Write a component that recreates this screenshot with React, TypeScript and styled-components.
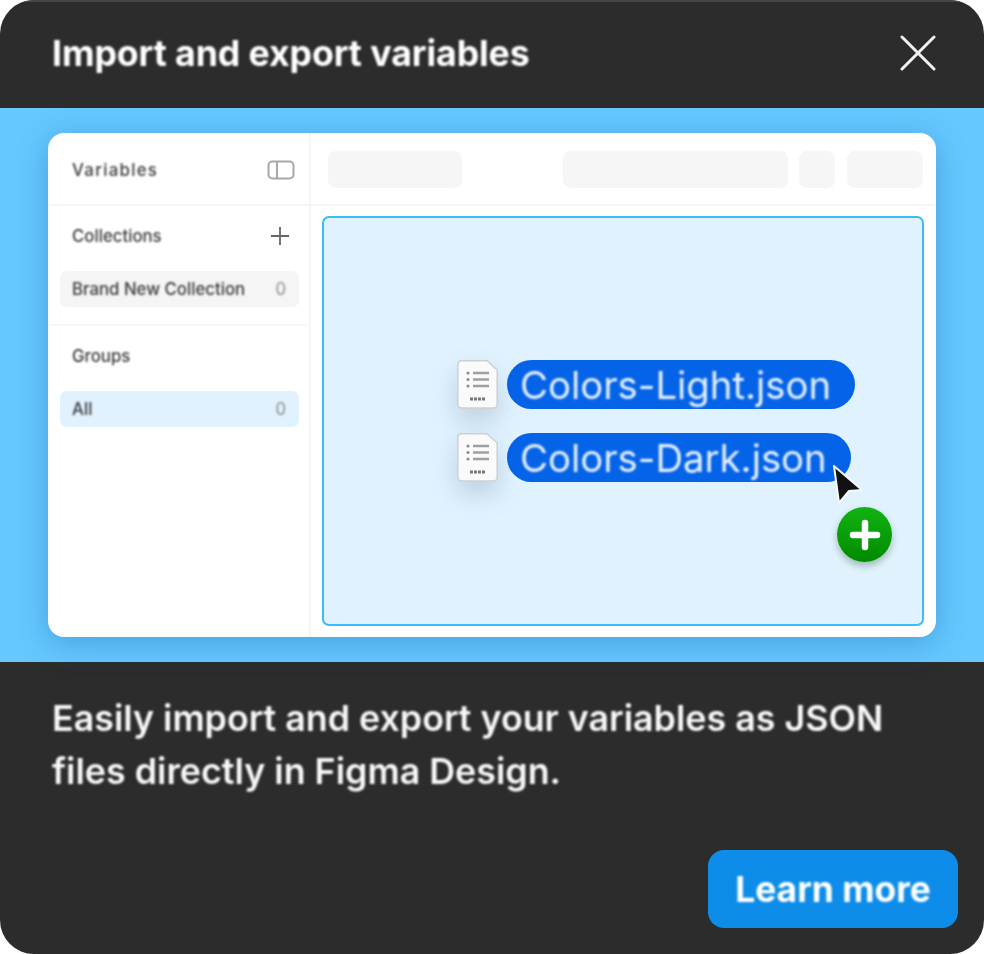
import React from 'react';
import styled, { createGlobalStyle } from 'styled-components';

const GlobalStyle = createGlobalStyle`
	html,
	body {
		margin: 0;
		padding: 0;
		background: #ffffff;
	}
	* {
		box-sizing: border-box;
	}
`;

const Card = styled.div`
	width: 984px;
	height: 954px;
	display: flex;
	flex-direction: column;
	overflow: hidden;
	border-radius: 34px;
	background: #2c2c2c;
	font-family: Inter, 'Liberation Sans', sans-serif;
`;

const Header = styled.header`
	height: 108px;
	flex: none;
	display: flex;
	align-items: center;
	justify-content: space-between;
	padding: 0 48px 4px 52px;
	border-top: 2px solid #444444;
`;

const Title = styled.h1`
	margin: 0;
	color: #ffffff;
	font-size: 35.7px;
	font-weight: 700;
	letter-spacing: -0.1px;
	filter: blur(0.85px);
`;

const CloseIcon = styled.svg`
	width: 36px;
	height: 36px;
	display: block;
	filter: blur(0.6px);
`;

const Banner = styled.div`
	height: 554px;
	flex: none;
	padding: 25px 48px;
	background: #66c8ff;
`;

const Window = styled.div`
	height: 504px;
	display: flex;
	overflow: hidden;
	border-radius: 16px;
	background: #ffffff;
	box-shadow: 0 6px 30px rgba(20, 100, 170, 0.4);
`;

const Sidebar = styled.aside`
	width: 263px;
	flex: none;
	display: flex;
	flex-direction: column;
	border-right: 2px solid #f5f5f5;
	color: #3a3a3a;
	font-size: 16.8px;
	font-weight: 500;
`;

const SidebarTitle = styled.div`
	height: 73px;
	flex: none;
	display: flex;
	align-items: center;
	justify-content: space-between;
	padding: 2px 14px 0 24px;
	border-bottom: 2px solid #f5f5f5;
`;

const SectionLabel = styled.div`
	height: 65px;
	flex: none;
	display: flex;
	align-items: center;
	justify-content: space-between;
	padding: 0 20px 5px 24px;
`;

const SidebarSection = styled.div<{ $divided?: boolean }>`
	padding-bottom: ${({ $divided }) => ($divided ? '17px' : '0')};
	border-bottom: ${({ $divided }) => ($divided ? '2px solid #f7f7f7' : '0')};
`;

const ListRow = styled.div<{ $active?: boolean }>`
	height: 36px;
	margin: 0 10px 0 12px;
	padding: 0 13px 0 12px;
	display: flex;
	align-items: center;
	justify-content: space-between;
	border-radius: 7px;
	background: ${({ $active }) => ($active ? '#e0f2fe' : '#f5f5f5')};
`;

const Blurred = styled.span`
	filter: blur(1px);
`;

const WideLabel = styled(Blurred)`
	letter-spacing: 1.3px;
`;

const Count = styled(Blurred)`
	color: #8c8c8c;
	font-weight: 400;
`;

const Main = styled.main`
	flex: 1;
	min-width: 0;
	display: flex;
	flex-direction: column;
`;

const Toolbar = styled.div`
	height: 73px;
	flex: none;
	display: flex;
	align-items: flex-start;
	gap: 11px;
	padding: 18px 0 0 17px;
	border-bottom: 2px solid #f5f5f5;
`;

const Placeholder = styled.div<{ $width: number; $after?: number }>`
	width: ${({ $width }) => $width}px;
	height: 37px;
	flex: none;
	margin-right: ${({ $after }) => $after ?? 0}px;
	border-radius: 8px;
	background: #f6f6f6;
`;

const DropZone = styled.div`
	position: relative;
	height: 410px;
	margin: 10px 12px 0 11px;
	padding: 142px 0 0 133px;
	display: flex;
	flex-direction: column;
	gap: 24px;
	border: 2.5px solid #38bdf8;
	border-radius: 7px;
	background: #e0f2fe;
`;

const FileRow = styled.div`
	display: flex;
	align-items: center;
	gap: 9px;
`;

const FileIcon = styled.svg`
	width: 41px;
	height: 49px;
	flex: none;
	display: block;
	overflow: visible;
	filter: drop-shadow(0 12px 12px rgba(60, 90, 120, 0.22)) blur(0.6px);
`;

const FilePill = styled.div`
	height: 49px;
	display: flex;
	align-items: center;
	padding: 0 24px 0 13px;
	border-radius: 25px;
	background: #0563e8;
	color: #e4f0ff;
	font-size: 38.3px;
	font-weight: 400;
	white-space: nowrap;
`;

const PillText = styled.span`
	filter: blur(0.85px);
`;

const CursorIcon = styled.svg`
	position: absolute;
	left: 507px;
	top: 246px;
	width: 34px;
	height: 42px;
	filter: blur(0.5px);
`;

const AddBadge = styled.div`
	position: absolute;
	left: 513px;
	top: 289px;
	width: 55px;
	height: 55px;
	display: flex;
	align-items: center;
	justify-content: center;
	border-radius: 50%;
	background: linear-gradient(#12b312, #008a00);
	box-shadow: 0 4px 7px rgba(0, 60, 0, 0.3);
`;

const Description = styled.p`
	margin: 0;
	padding: 30px 40px 0 52px;
	color: #f8f8f8;
	font-size: 35.8px;
	font-weight: 600;
	line-height: 53px;
	white-space: nowrap;
	filter: blur(0.85px);
`;

const Footer = styled.footer`
	margin-top: auto;
	padding: 0 26px 26px 0;
	display: flex;
	justify-content: flex-end;
`;

const LearnMore = styled.button`
	width: 250px;
	height: 78px;
	border: 0;
	padding: 0;
	border-radius: 16px;
	background: #0d8ce9;
	color: #ffffff;
	font-family: inherit;
	font-size: 35.4px;
	font-weight: 700;
`;

const ButtonLabel = styled.span`
	display: block;
	filter: blur(0.85px);
`;

const PanelToggle = () => (
	<svg width="28" height="20" viewBox="0 0 28 20" fill="none" stroke="#a8a8a8" strokeWidth="2">
		<rect x="1.5" y="1.5" width="25" height="17" rx="4" />
		<path d="M10 1.5v17" />
	</svg>
);

const PlusIcon = () => (
	<svg width="18" height="18" viewBox="0 0 18 18" stroke="#666666" strokeWidth="1.8">
		<path d="M9 0v18M0 9h18" />
	</svg>
);

const JsonFile = () => (
	<FileIcon viewBox="0 0 41 49">
		<path d="M4 .8h26L40.2 10v34A4 4 0 0 1 36.200 48H4.800A4 4 0 0 1 .8 44V4.800A4 4 0 0 1 4 .8z" fill="#fafafa" stroke="#cfcfcf" strokeWidth="1.500" />
		<g fill="#8f8f8f">
			<circle cx="11" cy="13" r="1.600" />
			<circle cx="11" cy="19.500" r="1.600" />
			<circle cx="11" cy="26" r="1.600" />
		</g>
		<path d="M16 13h16M16 19.500h16M16 26h16" stroke="#a0a0a0" strokeWidth="2.400" />
		<path d="M13 39h15" stroke="#777777" strokeWidth="3" strokeDasharray="3 1" />
	</FileIcon>
);

const files = ['Colors-Light.json', 'Colors-Dark.json'];

const App: React.FC = () => {
	return (
		<>
			<GlobalStyle />
			<Card>
				<Header>
					<Title>Import and export variables</Title>
					<CloseIcon viewBox="0 0 36 36" fill="none" stroke="#f2f2f2" strokeWidth="3" strokeLinecap="round">
						<path d="M2 2l32 32M34 2L2 34" />
					</CloseIcon>
				</Header>
				<Banner>
					<Window>
						<Sidebar>
							<SidebarTitle>
								<WideLabel>Variables</WideLabel>
								<PanelToggle />
							</SidebarTitle>
							<SidebarSection $divided>
								<SectionLabel>
									<Blurred>Collections</Blurred>
									<PlusIcon />
								</SectionLabel>
								<ListRow>
									<Blurred>Brand New Collection</Blurred>
									<Count>0</Count>
								</ListRow>
							</SidebarSection>
							<SectionLabel>
								<Blurred>Groups</Blurred>
							</SectionLabel>
							<ListRow $active>
								<Blurred>All</Blurred>
								<Count>0</Count>
							</ListRow>
						</Sidebar>
						<Main>
							<Toolbar>
								<Placeholder $width={134} $after={90} />
								<Placeholder $width={225} />
								<Placeholder $width={36} $after={1} />
								<Placeholder $width={76} />
							</Toolbar>
							<DropZone>
								{files.map((name) => (
									<FileRow key={name}>
										<JsonFile />
										<FilePill>
											<PillText>{name}</PillText>
										</FilePill>
									</FileRow>
								))}
								<CursorIcon viewBox="0 0 34 42">
									<path d="M3 2l28 24-13 1-10 12z" fill="#111111" stroke="#f4f8fc" strokeWidth="2" strokeLinejoin="round" />
								</CursorIcon>
								<AddBadge>
									<svg width="32" height="32" viewBox="0 0 32 32" stroke="#ffffff" strokeWidth="6.500" strokeLinecap="round">
										<path d="M16 4v24M4 16h24" />
									</svg>
								</AddBadge>
							</DropZone>
						</Main>
					</Window>
				</Banner>
				<Description>
					Easily import and export your variables as JSON
					<br />
					files directly in Figma Design.
				</Description>
				<Footer>
					<LearnMore>
						<ButtonLabel>Learn more</ButtonLabel>
					</LearnMore>
				</Footer>
			</Card>
		</>
	);
};

export default App;
